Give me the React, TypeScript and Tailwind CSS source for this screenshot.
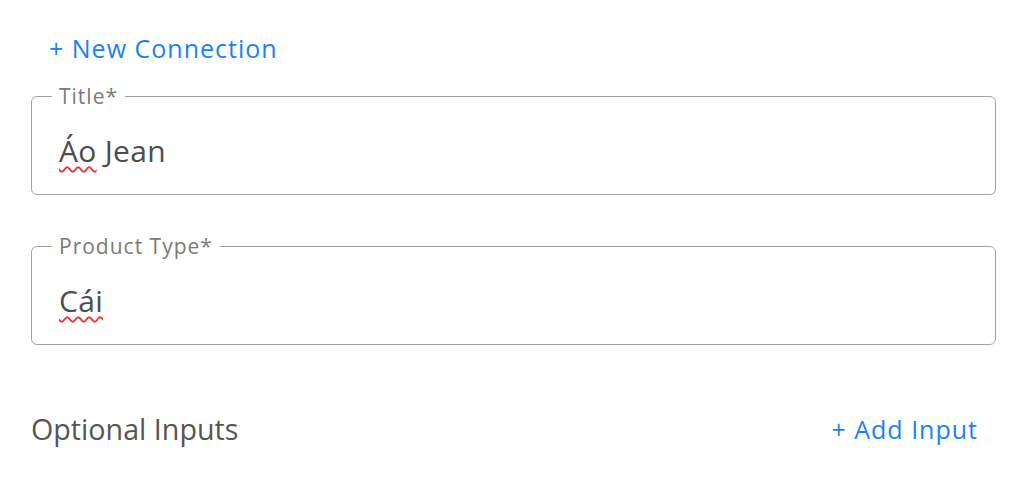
import React from "react";

type FieldProps = {
  label: string;
  flagged: string;
  rest: string;
};

const Field: React.FC<FieldProps> = ({ label, flagged, rest }) => (
  <fieldset className="rounded-[6px] border border-[#a3a3a3] pb-[25px] pl-[27px] pr-4">
    <legend className="-ml-[7px] px-[7px] text-[21px] leading-[24px] tracking-[1px] text-[#7a7a7a]">
      {label}
    </legend>
    <div className="mt-[25px] text-[30px] leading-[36px] tracking-[0.3px] text-[#4d4d4d]">
      <span className="underline decoration-wavy decoration-[#e53935] decoration-[1.5px] underline-offset-[4px]">
        {flagged}
      </span>
      {rest}
    </div>
  </fieldset>
);

export default function App() {
  return (
    <div
      className="h-[499px] w-[1020px] bg-white"
      style={{ fontFamily: '"Open Sans", "Noto Sans", sans-serif' }}
    >
      <div className="pl-[31px] pr-[24px] pt-[33px]">
        <button className="ml-[18px] text-[25px] leading-[30px] tracking-[1px] text-[#1a82f7]">
          + New Connection
        </button>

        <div className="mt-[20px] flex flex-col gap-[39px]">
          <Field label="Title*" flagged="Áo" rest=" Jean" />
          <Field label="Product Type*" flagged="Cái" rest="" />
        </div>

        <div className="mt-[66px] flex items-center justify-between pr-[18px]">
          <h2 className="text-[28.7px] leading-[36px] text-[#555555]">Optional Inputs</h2>
          <button className="text-[25px] leading-[30px] tracking-[1px] text-[#1a82f7]">
            + Add Input
          </button>
        </div>
      </div>
    </div>
  );
}
